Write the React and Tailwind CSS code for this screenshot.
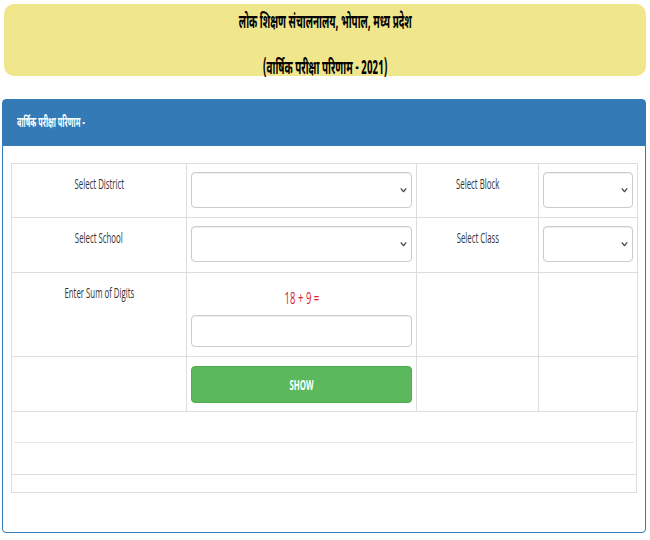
import React from 'react';

const latin = "font-['Open_Sans','Noto_Sans',sans-serif]";
const deva = "font-['Noto_Sans_Devanagari','Lohit_Devanagari','Noto_Sans','Open_Sans',sans-serif]";

const Squeeze = ({ children, className = 'scale-x-[0.56]' }) => (
  <span className={`inline-block whitespace-nowrap ${className}`}>{children}</span>
);

const Chevron = () => (
  <svg width="7" height="5" viewBox="0 0 7 5" className="absolute right-[4px] top-1/2 -translate-y-1/2">
    <path d="M0.8 0.8 L3.5 4.2 L6.2 0.8" fill="none" stroke="#444" strokeWidth="1.2" />
  </svg>
);

const SelectBox = () => (
  <div className="relative h-[36px] w-full rounded-[4px] border border-[#ccc] bg-white shadow-[inset_0_1px_1px_rgba(0,0,0,0.075)]">
    <Chevron />
  </div>
);

const Label = ({ children }) => (
  <td className="border border-[#ddd] align-top pt-[10px] text-center text-[14px] leading-[20px] text-[#333]">
    <Squeeze>{children}</Squeeze>
  </td>
);

const App = () => {
  return (
    <div className={`w-[650px] h-[540px] bg-white overflow-hidden ${latin}`}>
      <div className="mx-[4px] mt-[4px] h-[72px] rounded-[10px] bg-[#f0e68c] flex flex-col items-center text-black">
        <div className={`mt-[7px] text-[19px] leading-[26px] font-bold ${deva}`}>
          <Squeeze className="scale-x-[0.52]">लोक शिक्षण संचालनालय, भोपाल, मध्य प्रदेश</Squeeze>
        </div>
        <div className={`mt-[20px] text-[19px] leading-[26px] font-bold ${deva}`}>
          <Squeeze className="scale-x-[0.52]">(वार्षिक परीक्षा परिणाम - 2021)</Squeeze>
        </div>
      </div>

      <div className="mx-[2px] mt-[23px] w-[644px] h-[434px] rounded-[4px] border border-[#337ab7] bg-white">
        <div className="h-[46px] bg-[#337ab7] flex items-center pl-[14px] text-white">
          <span className={`text-[14px] font-bold ${deva} inline-block scale-x-[0.52] origin-left whitespace-nowrap`}>
            वार्षिक परीक्षा परिणाम -
          </span>
        </div>

        <div className="pl-[8px] pr-[6px] pt-[17px]">
          <table className="w-[626px] border-collapse table-fixed">
            <colgroup>
              <col className="w-[175px]" />
              <col className="w-[230px]" />
              <col className="w-[122px]" />
              <col className="w-[99px]" />
            </colgroup>
            <tbody>
              <tr className="h-[54px]">
                <Label>Select District</Label>
                <td className="border border-[#ddd] align-top px-[4px] pt-[8px]"><SelectBox /></td>
                <Label>Select Block</Label>
                <td className="border border-[#ddd] align-top px-[4px] pt-[8px]"><SelectBox /></td>
              </tr>
              <tr className="h-[55px]">
                <Label>Select School</Label>
                <td className="border border-[#ddd] align-top px-[4px] pt-[8px]"><SelectBox /></td>
                <Label>Select Class</Label>
                <td className="border border-[#ddd] align-top px-[4px] pt-[8px]"><SelectBox /></td>
              </tr>
              <tr className="h-[84px]">
                <Label>Enter Sum of Digits</Label>
                <td className="border border-[#ddd] align-top px-[4px] pt-[14px]">
                  <div className="text-center text-[17px] leading-[22px] text-[#d9232e]">
                    <Squeeze>18 + 9 =</Squeeze>
                  </div>
                  <div className="mt-[6px] h-[32px] rounded-[4px] border border-[#ccc] bg-white shadow-[inset_0_1px_1px_rgba(0,0,0,0.075)]" />
                </td>
                <td className="border border-[#ddd]" />
                <td className="border border-[#ddd]" />
              </tr>
              <tr className="h-[55px]">
                <td className="border border-[#ddd]" />
                <td className="border border-[#ddd] align-top px-[4px] pt-[9px]">
                  <div className="h-[37px] rounded-[4px] bg-[#5cb85c] border border-[#4cae4c] flex items-center justify-center text-white text-[14px] font-bold">
                    <Squeeze>SHOW</Squeeze>
                  </div>
                </td>
                <td className="border border-[#ddd]" />
                <td className="border border-[#ddd]" />
              </tr>
            </tbody>
          </table>
          <div className="w-[626px] border-x border-b border-[#ddd]">
            <div className="h-[31px] mx-[2px] border-b border-[#e6e6e6]" />
            <div className="h-[32px] border-b border-[#ddd]" />
            <div className="h-[17px]" />
          </div>
        </div>
      </div>
    </div>
  );
};

export default App;
